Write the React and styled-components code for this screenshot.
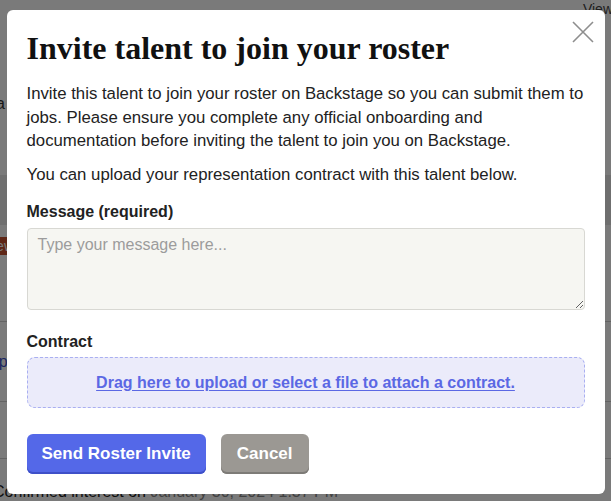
import React from "react";
import styled, { createGlobalStyle } from "styled-components";

const Global = createGlobalStyle`
  html, body { margin: 0; padding: 0; background: #fff; overflow: hidden; }
  body { font-family: "Liberation Sans", Arial, sans-serif; color: #222; }
  * { box-sizing: border-box; }
`;

/* ---------- background page ---------- */
const Page = styled.div`
  width: 611px;
  height: 501px;
  overflow: hidden;
  display: flex;
  flex-direction: column;
`;
const TopBar = styled.div`
  height: 18px;
  display: flex;
  justify-content: flex-end;
  align-items: center;
  margin-right: -2px;
  font-size: 14px;
  color: #444;
`;
const Header = styled.div`
  height: 160px;
  display: flex;
  flex-direction: column;
  padding-top: 38px;
  margin-left: -30px;
`;
const BigHeading = styled.div`
  font-family: "Liberation Serif", serif;
  font-weight: 700;
  font-size: 36px;
  line-height: 36px;
  color: #111;
`;
const SubLine = styled.div`
  font-size: 16px;
  line-height: 24px;
  margin-left: 26px;
  color: #333;
`;
const Band = styled.div`
  height: 50px;
  background: #e9e9e9;
  flex-shrink: 0;
`;
const Row = styled.div`
  height: ${(p) => p.$h}px;
  flex-shrink: 0;
  border-bottom: 1px solid #d0d0d0;
  display: flex;
  align-items: ${(p) => p.$align || "center"};
  padding-top: ${(p) => p.$pt || 0}px;
  margin-left: -20px;
`;
const Badge = styled.span`
  background: #c5512e;
  color: #fff;
  font-size: 14px;
  padding: 2px 6px;
  line-height: 14px;
`;
const BlueText = styled.span`
  color: #3d4fc9;
  font-size: 16px;
`;
const BottomText = styled.div`
  font-size: 16px;
  color: #222;
  margin-left: -7px;
  padding-top: 24px;
  span { color: #888; }
`;

/* ---------- overlay + modal ---------- */
const Overlay = styled.div`
  position: fixed;
  inset: 0;
  background: rgba(0, 0, 0, 0.52);
  display: flex;
  align-items: flex-start;
  justify-content: center;
`;
const Modal = styled.div`
  position: relative;
  margin-top: 10px;
  width: 598px;
  background: #fff;
  border-radius: 6px;
  padding: 20px;
  display: flex;
  flex-direction: column;
`;
const Close = styled.button`
  position: absolute;
  top: 11px;
  right: 11px;
  width: 22px;
  height: 22px;
  padding: 0;
  border: 0;
  background: none;
  cursor: pointer;
  display: flex;
`;
const Title = styled.h2`
  margin: 0;
  font-family: "Liberation Serif", "Times New Roman", serif;
  font-weight: 700;
  font-size: 32px;
  line-height: 36px;
  color: #111;
`;
const Para = styled.p`
  margin: ${(p) => p.$mt}px 0 0 0;
  font-size: 16.75px;
  line-height: 23.5px;
  color: #222;
`;
const Label = styled.label`
  display: block;
  margin-top: ${(p) => p.$mt}px;
  font-size: 16px;
  line-height: 24px;
  font-weight: 700;
  color: #222;
`;
const TextArea = styled.textarea`
  display: block;
  margin-top: 4px;
  width: 100%;
  height: 82px;
  background: #f6f6f2;
  border: 1px solid #d8d8d3;
  border-radius: 4px;
  padding: 6px 10px;
  font-family: "Liberation Sans", Arial, sans-serif;
  font-size: 16px;
  line-height: 20px;
  color: #222;
  &::placeholder { color: #9c9c9c; }
`;
const Drop = styled.div`
  margin-top: 3px;
  height: 51px;
  background: #ebebfa;
  border: 1px dashed #a9aff1;
  border-radius: 8px;
  display: flex;
  align-items: center;
  justify-content: center;
`;
const DropLink = styled.a`
  color: #5b68e4;
  font-size: 16px;
  font-weight: 700;
  text-decoration: underline;
  text-underline-offset: 2px;
  cursor: pointer;
`;
const Actions = styled.div`
  margin-top: 26px;
  display: flex;
  gap: 15px;
`;
const Button = styled.button`
  height: 40px;
  padding: 0 ${(p) => p.$px}px;
  border: 0;
  border-radius: 6px;
  background: ${(p) => (p.$variant === "primary" ? "#5468e8" : "#9b9893")};
  box-shadow: inset 0 -2px 0 ${(p) => (p.$variant === "primary" ? "#3e50c8" : "#7d7b77")};
  color: #fff;
  font-family: "Liberation Sans", Arial, sans-serif;
  font-weight: 700;
  font-size: 17px;
  cursor: pointer;
`;

export default function App() {
  return (
    <>
      <Global />
      <Page>
        <TopBar>View</TopBar>
        <Header>
          <BigHeading>0</BigHeading>
          <SubLine>a</SubLine>
        </Header>
        <Band />
        <Row $h={97} $align="flex-start" $pt={12}>
          <Badge>New</Badge>
        </Row>
        <Row $h={80}>
          <BlueText>Expand</BlueText>
        </Row>
        <Row $h={57} />
        <BottomText>
          Confirmed interest on <span>January 30, 2024 1:37 PM</span>
        </BottomText>
      </Page>
      <Overlay>
        <Modal role="dialog" aria-modal="true">
          <Close aria-label="Close">
            <svg width="22" height="22" viewBox="0 0 22 22">
              <path d="M1 1 L21 21 M21 1 L1 21" stroke="#8e8e8e" strokeWidth="1.6" fill="none" />
            </svg>
          </Close>
          <Title>Invite talent to join your roster</Title>
          <Para $mt={16}>
            Invite this talent to join your roster on Backstage so you can submit them to
            <br />
            jobs. Please ensure you complete any official onboarding and
            <br />
            documentation before inviting the talent to join you on Backstage.
          </Para>
          <Para $mt={10}>You can upload your representation contract with this talent below.</Para>
          <Label $mt={14} htmlFor="msg">Message (required)</Label>
          <TextArea id="msg" placeholder="Type your message here..." />
          <Label $mt={20}>Contract</Label>
          <Drop>
            <DropLink>Drag here to upload or select a file to attach a contract.</DropLink>
          </Drop>
          <Actions>
            <Button $variant="primary" $px={15}>Send Roster Invite</Button>
            <Button $variant="secondary" $px={16}>Cancel</Button>
          </Actions>
        </Modal>
      </Overlay>
    </>
  );
}
